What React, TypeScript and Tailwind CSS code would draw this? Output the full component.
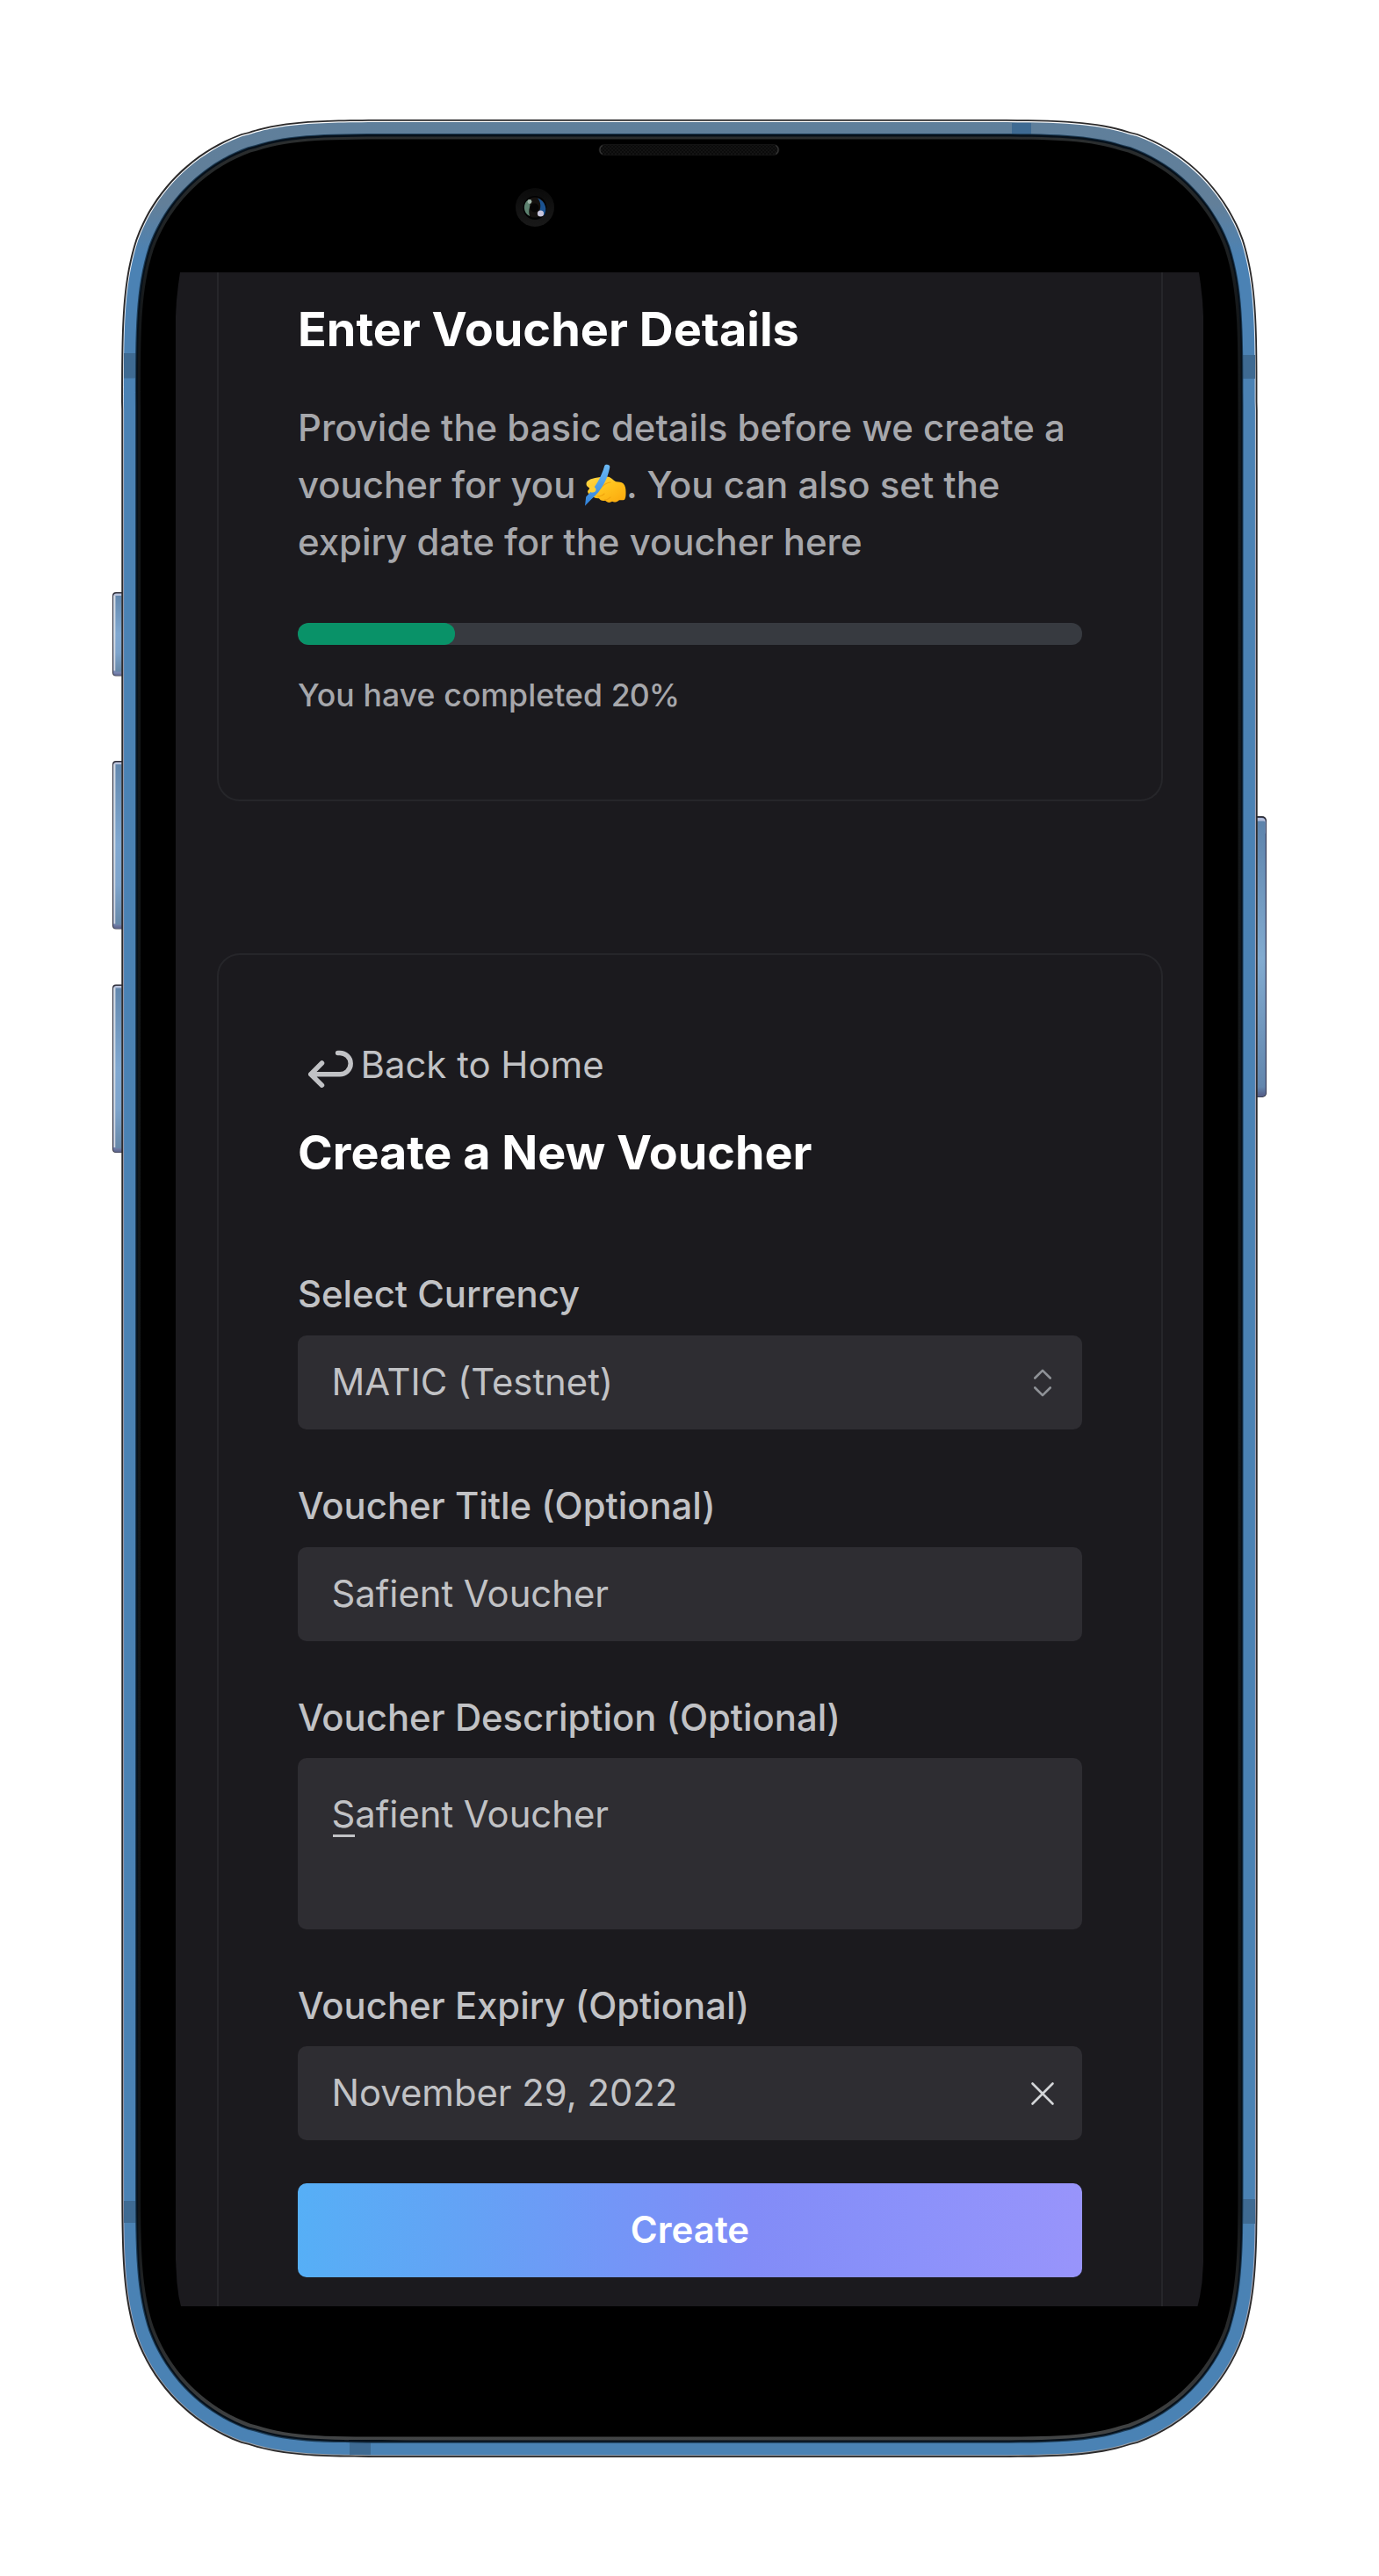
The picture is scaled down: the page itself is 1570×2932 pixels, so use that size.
import type { ReactNode } from "react";

/** Rectangle path with continuous (squircle) corners. */
function squircle(x0: number, y0: number, x1: number, y1: number, r: number) {
  const a = 1.52866 * r, b = 1.0885 * r, c = 0.8684 * r, d = 0.66993 * r;
  const e = 0.0655 * r, f = 0.63149 * r, g = 0.07491 * r, h = 0.37282 * r, i = 0.16906 * r;
  return [
    `M${x0 + a} ${y0}H${x1 - a}`,
    `C${x1 - b} ${y0} ${x1 - c} ${y0} ${x1 - d} ${y0 + e}L${x1 - f} ${y0 + g}`,
    `C${x1 - h} ${y0 + i} ${x1 - i} ${y0 + h} ${x1 - g} ${y0 + f}`,
    `C${x1} ${y0 + c} ${x1} ${y0 + b} ${x1} ${y0 + a}V${y1 - a}`,
    `C${x1} ${y1 - b} ${x1} ${y1 - c} ${x1 - g} ${y1 - f}`,
    `C${x1 - i} ${y1 - h} ${x1 - h} ${y1 - i} ${x1 - f} ${y1 - g}L${x1 - d} ${y1 - e}`,
    `C${x1 - c} ${y1} ${x1 - b} ${y1} ${x1 - a} ${y1}H${x0 + a}`,
    `C${x0 + b} ${y1} ${x0 + c} ${y1} ${x0 + d} ${y1 - e}L${x0 + f} ${y1 - g}`,
    `C${x0 + h} ${y1 - i} ${x0 + i} ${y1 - h} ${x0 + g} ${y1 - f}`,
    `C${x0} ${y1 - c} ${x0} ${y1 - b} ${x0} ${y1 - a}V${y0 + a}`,
    `C${x0} ${y0 + b} ${x0} ${y0 + c} ${x0 + g} ${y0 + f}`,
    `C${x0 + i} ${y0 + h} ${x0 + h} ${y0 + i} ${x0 + f} ${y0 + g}L${x0 + d} ${y0 + e}`,
    `C${x0 + c} ${y0} ${x0 + b} ${y0} ${x0 + a} ${y0}Z`,
  ].join("");
}

function SideButton({ y, h }: { y: number; h: number }) {
  return (
    <g>
      <rect x={128} y={y} width={20} height={h} rx={4} fill="#2e2e3a" />
      <rect x={129} y={y + 1.5} width={19} height={h - 2} rx={3.5} fill="url(#buttonEnds)" />
      <rect x={129.5} y={y + 4} width={2} height={h - 10} fill="#d3d9e0" />
      <rect x={131.5} y={y + 4} width={7} height={h - 9} fill="url(#buttonFace)" />
    </g>
  );
}

function PhoneBody() {
  return (
    <svg className="absolute inset-0" width="1570" height="2932" viewBox="0 0 1570 2932" aria-hidden="true">
      <defs>
        <linearGradient id="metal" gradientUnits="userSpaceOnUse" x1="0" y1="139" x2="0" y2="2794">
          <stop offset="0" stopColor="#5f7f9b" />
          <stop offset="0.035" stopColor="#627f99" />
          <stop offset="0.058" stopColor="#4b82b4" />
          <stop offset="1" stopColor="#4a82b4" />
        </linearGradient>
        <linearGradient id="rim" gradientUnits="userSpaceOnUse" x1="0" y1="155" x2="0" y2="2778">
          <stop offset="0" stopColor="#2b2e2f" />
          <stop offset="0.08" stopColor="#141719" />
          <stop offset="0.9" stopColor="#131618" />
          <stop offset="0.96" stopColor="#2c2e2f" />
          <stop offset="1" stopColor="#434546" />
        </linearGradient>
        <linearGradient id="light" gradientUnits="userSpaceOnUse" x1="0" y1="137" x2="0" y2="2796">
          <stop offset="0" stopColor="#ffffff" />
          <stop offset="0.1" stopColor="#e6e9ef" />
          <stop offset="0.2" stopColor="#b3b0c2" />
          <stop offset="0.9" stopColor="#b3b0c2" />
          <stop offset="1" stopColor="#9b9fa4" />
        </linearGradient>
        <linearGradient id="buttonEnds" x1="0" y1="0" x2="0" y2="1">
          <stop offset="0" stopColor="#b9c3dc" />
          <stop offset="0.5" stopColor="#a9c0dc" />
          <stop offset="0.97" stopColor="#7784b0" />
          <stop offset="1" stopColor="#5a6288" />
        </linearGradient>
        <linearGradient id="buttonFace" x1="0" y1="0" x2="0" y2="1">
          <stop offset="0" stopColor="#6288ae" />
          <stop offset="0.5" stopColor="#80a8d1" />
          <stop offset="0.75" stopColor="#7da4cc" />
          <stop offset="1" stopColor="#6688a8" />
        </linearGradient>
        <linearGradient id="powerFace" x1="0" y1="0" x2="0" y2="1">
          <stop offset="0" stopColor="#5d83ab" />
          <stop offset="0.5" stopColor="#82abd0" />
          <stop offset="0.97" stopColor="#6286ad" />
          <stop offset="1" stopColor="#55608a" />
        </linearGradient>
        <linearGradient id="lensRing" x1="0" y1="0" x2="0" y2="1">
          <stop offset="0" stopColor="#0a0a0a" />
          <stop offset="1" stopColor="#191919" />
        </linearGradient>
        <pattern id="mesh" width="4" height="4" patternUnits="userSpaceOnUse">
          <rect width="4" height="4" fill="#131313" />
          <circle cx="1" cy="1" r="0.9" fill="#070707" />
          <circle cx="3" cy="3" r="0.9" fill="#070707" />
        </pattern>
      </defs>

      <SideButton y={674} h={95.5} />
      <SideButton y={866} h={191.5} />
      <SideButton y={1120.5} h={191.5} />
      <rect x={1420} y={929} width={22} height={320} rx={5} fill="#26262e" />
      <rect x={1420} y={930.5} width={21.5} height={318} rx={5} fill="#56628a" />
      <rect x={1420} y={931} width={20.5} height={20} rx={4} fill="#b4bfdb" />
      <rect x={1420} y={934.5} width={20.5} height={312} rx={2} fill="url(#powerFace)" />

      <path d={squircle(138.3, 136, 1431.7, 2797, 216)} fill="#2b2a2b" />
      <path d={squircle(140.2, 137.8, 1429.9, 2795.2, 214.5)} fill="url(#light)" />
      <path d={squircle(141.1, 139.1, 1428.9, 2794.3, 213.5)} fill="url(#metal)" />
      <g fill="#3e6a92">
        <rect x={141} y={402} width={14} height={28.5} />
        <rect x={1415} y={404} width={14} height={27} />
        <rect x={1152} y={140} width={22} height={15} />
        <rect x={398} y={2779} width={24} height={15} />
        <rect x={141} y={2505} width={14} height={25} />
        <rect x={1415} y={2503} width={14} height={28} />
      </g>
      <path d={squircle(154, 152, 1415.5, 2780.8, 203)} fill="#1d3c56" />
      <path d={squircle(155.2, 153, 1414.5, 2779.6, 202)} fill="#06101a" />
      <path d={squircle(157, 155.6, 1412.8, 2777.4, 200)} fill="url(#rim)" />
      <path d={squircle(160, 158.6, 1409.5, 2773.6, 198)} fill="#000000" />

      <rect x={682} y={164.5} width={205} height={12} rx={6} fill="url(#mesh)" stroke="#131313" />
      <path d="M686 165.500a5.600 5.600 0 0 0 0 10M883 165.500a5.600 5.600 0 0 1 0 10" fill="none" stroke="#333333" strokeWidth="1.3" />

      <circle cx={609} cy={236} r={22} fill="url(#lensRing)" />
      <circle cx={609} cy={236.5} r={13.4} fill="#020203" />
      <circle cx={609} cy={236} r={11.5} fill="#14110f" />
      <path d="M602 227c-7 4-7 15 1 19-1-4-1-7 0-10 1-4 0-7-1-9Z" fill="#5d8270" />
      <path d="M612 225.500c9 3 12 14 7 20-2-2-5-3-5-5 2-4 2-11-2-15Z" fill="#1b5290" />
      <circle cx={608.500} cy={236.500} r={5} fill="#060505" />
      <circle cx={603} cy={229.500} r={2.400} fill="#9fb5a9" />
      <circle cx={615.500} cy={243} r={3.600} fill="#c9c6dc" />
    </svg>
  );
}

function WritingHand() {
  return (
    <svg className="ml-[-3.5px] inline-block align-[-10px]" width="50" height="50" viewBox="0 0 50 50" role="img" aria-label="writing hand">
      <defs>
        <linearGradient id="hand" x1="0" y1="0" x2="1" y2="1">
          <stop offset="0" stopColor="#ffd84a" />
          <stop offset="0.5" stopColor="#ffc11c" />
          <stop offset="1" stopColor="#fba70c" />
        </linearGradient>
        <linearGradient id="pen" x1="0" y1="0" x2="0" y2="1">
          <stop offset="0" stopColor="#6cb9f4" />
          <stop offset="1" stopColor="#2f82dc" />
        </linearGradient>
      </defs>
      <path
        d="M4.500 24c0-4 5-6 10-7 5-1 11-2 15-1.300 3.500.6 6 4.500 9 5.500 3 .8 6 0 8 2 2.500 2.500 3 6 3 10 0 3.500 0 6.500-1.500 8.500-2 1-4 .2-6 .6-2.500 2-5.500 3.200-8 1.500-3 2-6 1-8-1-3.500.8-6-.7-7-2.500-3.500.3-6-1-8-3-2.500-.5-4.500-2.500-5-4.500 0-2 2-3 2.500-4.400-2-1-4-2-4-4.400Z"
        fill="url(#hand)"
      />
      <path d="M20 29c4-4 8-7 12-7M17 38c3 0 6-1 8-3M25 42c3 0 5-1 7-3" fill="none" stroke="#f2a50f" strokeWidth="1.100" strokeLinecap="round" />
      <path d="M25.300 3c1-2.400 6.600-1.500 6 1.700C29 17.500 22.500 31 9.500 42L3 48.800 4.200 38.500C14 29 21.300 17 25.300 3Z" fill="url(#pen)" />
      <path d="M7 25c4 .2 8 2 8.500 5 .3 3-3 4.500-6.500 3" fill="#ffcf35" />
    </svg>
  );
}

function BackArrow() {
  return (
    <svg className="shrink-0" width="71.5" height="65" viewBox="0 0 71.500 65" fill="none" stroke="#c1c2c5" strokeWidth="5.500" strokeLinecap="round" strokeLinejoin="round" aria-hidden="true">
      <path d="M27.500 31 14.800 43.800l12.700 12.400M14.800 43.800H48c6 0 12.200-4.800 12.200-12.200S54 19.500 48 19.500h-2.400" />
    </svg>
  );
}

function Label({ children, className }: { children: ReactNode; className: string }) {
  return <label className={`block text-[41.8px] leading-[65px] font-medium text-[#c1c2c5] ${className}`}>{children}</label>;
}

function Field({ children, icon, className }: { children: ReactNode; icon?: ReactNode; className: string }) {
  return (
    <div className={`flex h-[107px] items-center justify-between rounded-[10px] bg-[#2e2d32] pr-[31px] pl-[38.5px] text-[41.8px] leading-[65px] text-[#c1c2c5] ${className}`}>
      <span>{children}</span>
      {icon}
    </div>
  );
}

export default function App() {
  return (
    <main className="relative h-[2932px] w-[1570px] overflow-hidden bg-white font-['Inter',sans-serif] pt-[310px] pl-[200px]">
      <PhoneBody />
      <div className="relative h-[2315px] w-[1170px] overflow-hidden bg-[#1b1a1e] pr-[46px] pl-[47px] [clip-path:polygon(5px_0,1165px_0,1167px_14px,1169px_32px,1170px_50px,1170px_2265px,1168.500px_2288px,1166px_2304px,1163.500px_2315px,6px_2315px,3.500px_2304px,1.500px_2288px,0_2262px,0_50px,1px_32px,3px_14px)]">
        <section className="h-[602px] rounded-b-[26px] border-2 border-t-0 border-[#26262a] px-[90px] pt-[35px]">
          <h1 className="text-[54px] leading-[60px] font-bold text-white">Enter Voucher Details</h1>
          <p className="mt-[49px] text-[41.9px] leading-[65px] font-medium whitespace-nowrap text-[#a6a7ab]">
            Provide the basic details before we create a
            <br />
            voucher for you <WritingHand />. You can also set the
            <br />
            expiry date for the voucher here
          </p>
          <div className="mt-[60px] h-[25px] overflow-hidden rounded-[12px] bg-[#373a40]">
            <div className="h-full w-1/5 rounded-[12px] bg-[#099268]" />
          </div>
          <p className="mt-[30px] text-[35.6px] leading-[56px] font-medium text-[#a6a7ab]">
            <span className="tracking-[0.1px]">You have completed </span>
            <span className="tracking-[-1px]">20%</span>
          </p>
        </section>

        <section className="mt-[173px] h-[1700px] rounded-t-[26px] border-2 border-[#26262a] px-[90px] pt-[92px]">
          <a className="flex items-center text-[41.9px] leading-[65px] text-[#c1c2c5]">
            <BackArrow />
            Back to Home
          </a>
          <h2 className="mt-[38px] text-[53.8px] leading-[60px] font-bold text-white">Create a New Voucher</h2>

          <Label className="mt-[99px]">Select Currency</Label>
          <Field
            className="mt-[14px]"
            icon={
              <svg className="mr-[4px]" width="20" height="34" viewBox="0 0 20 34" fill="none" stroke="#8f9297" strokeWidth="2.600" strokeLinecap="round" strokeLinejoin="round" aria-hidden="true">
                <path d="M1.300 11.500 10 2.800l8.700 8.700M1.300 22.500 10 31.200l8.700-8.700" />
              </svg>
            }
          >
            MATIC (Testnet)
          </Field>

          <Label className="mt-[55px]">Voucher Title (Optional)</Label>
          <Field className="mt-[14px]">Safient Voucher</Field>

          <Label className="mt-[55px]">Voucher Description (Optional)</Label>
          <div className="mt-[13px] h-[195px] rounded-[10px] bg-[#2e2d32] pt-[32px] pl-[38.5px] text-[41.8px] leading-[65px] text-[#c1c2c5]">
            <span className="relative">
              Safient Voucher
              <span className="absolute bottom-[-1px] left-[1px] h-[3px] w-[25px] bg-[#c1c2c5]" />
            </span>
          </div>

          <Label className="mt-[55px]">Voucher Expiry (Optional)</Label>
          <Field
            className="mt-[13px]"
            icon={
              <svg width="28" height="28" viewBox="0 0 28 28" fill="none" stroke="#d3d5d8" strokeWidth="2.600" strokeLinecap="round" aria-hidden="true">
                <path d="m2.500 2.500 23 23M25.500 2.500l-23 23" />
              </svg>
            }
          >
            November 29, 2022
          </Field>

          <button className="mt-[49px] flex h-[107px] w-full items-center justify-center rounded-[10px] bg-[linear-gradient(90deg,#56aff6_0%,#64a2f5_22%,#7396f7_40%,#828cf7_58%,#8b91fa_78%,#9894fb_100%)] pb-[3px] text-[42px] leading-[65px] font-semibold text-white">
            Create
          </button>
        </section>
      </div>
    </main>
  );
}
